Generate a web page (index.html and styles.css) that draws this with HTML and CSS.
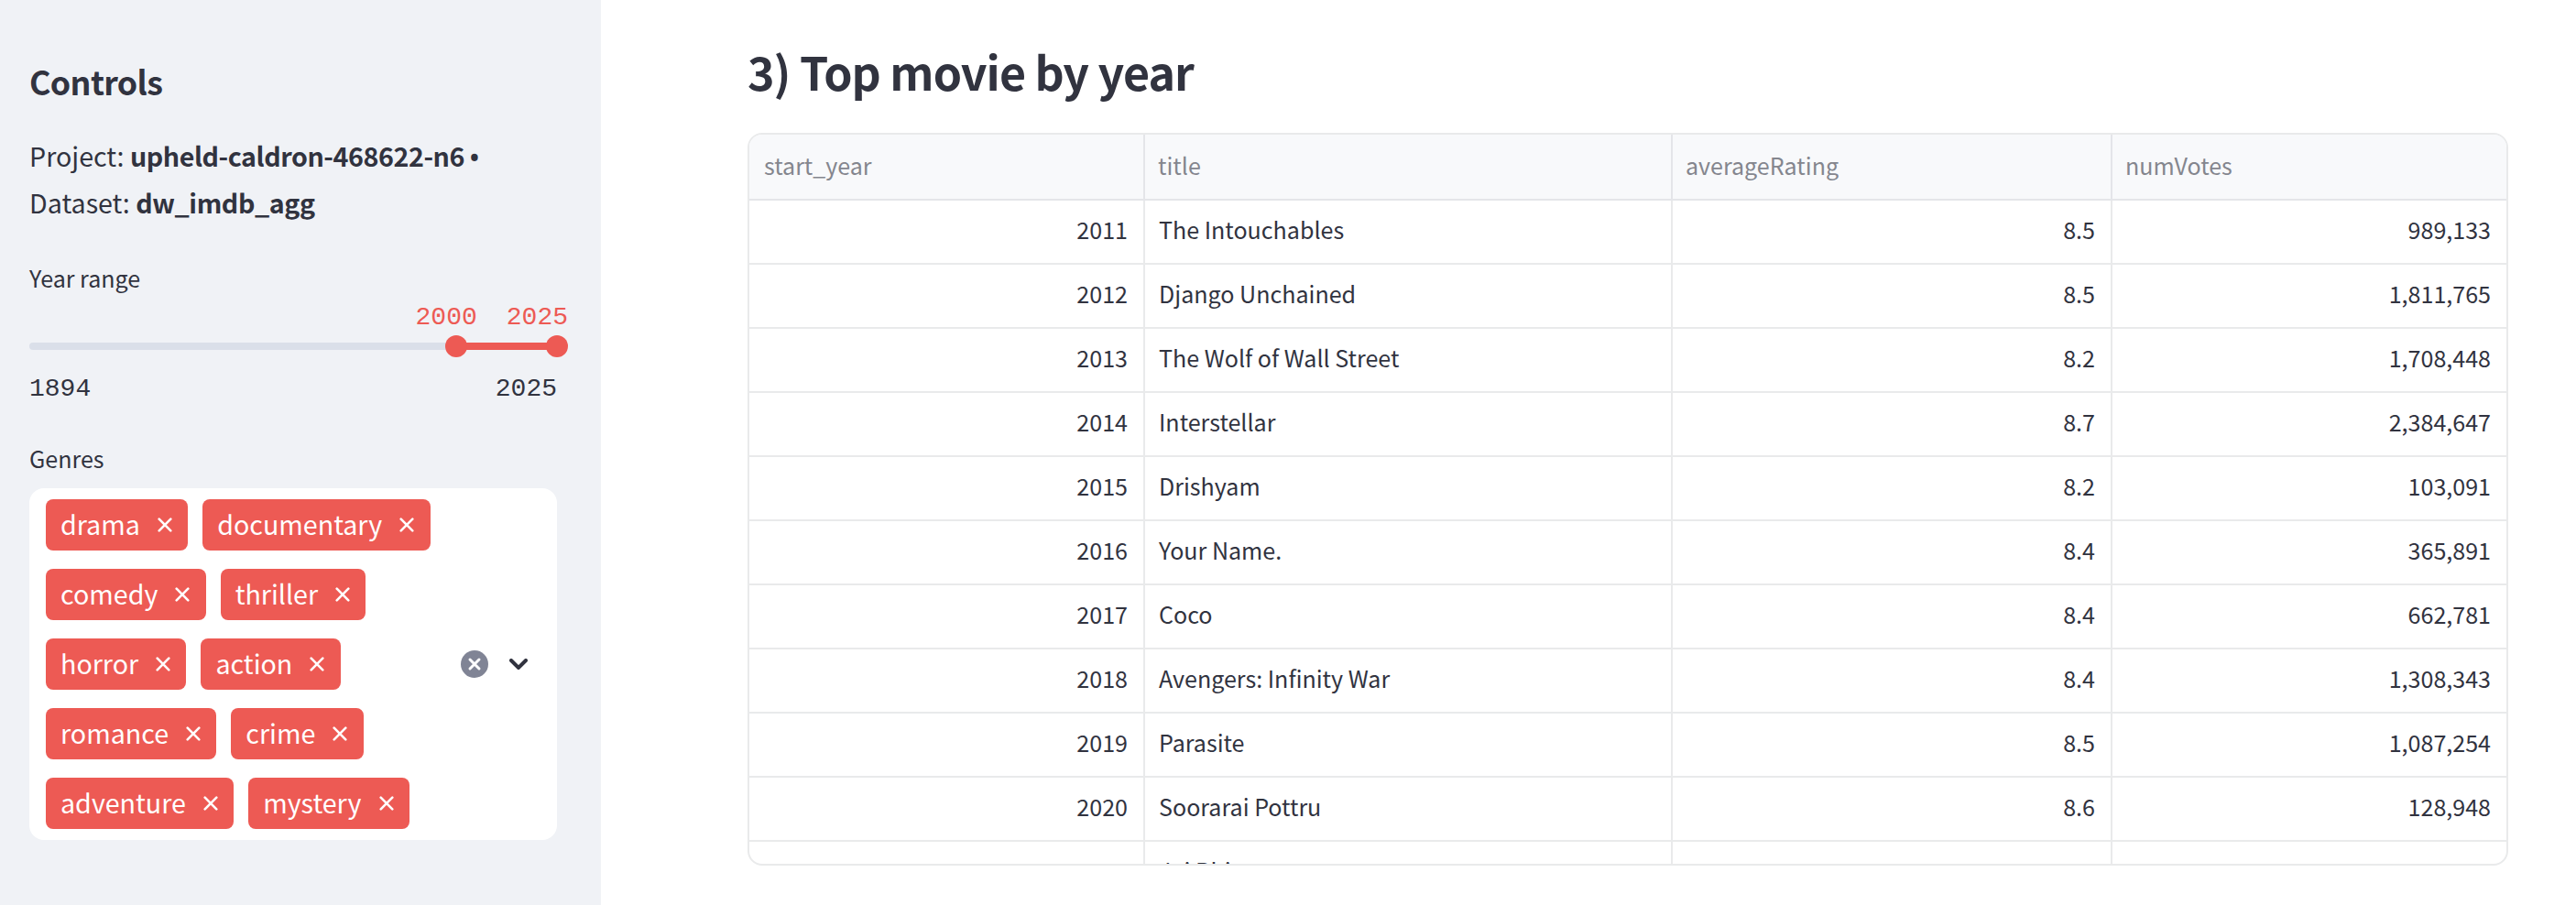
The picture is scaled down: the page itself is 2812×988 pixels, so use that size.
FILE: index.html
```html
<!DOCTYPE html>
<html lang="en">
<head>
<meta charset="utf-8">
<title>Top movie by year</title>
<link rel="stylesheet" href="styles.css">
</head>
<body>
<svg class="defs" width="0" height="0" aria-hidden="true">
  <symbol id="x" viewBox="0 0 16 16"><path d="M1.7 1.7 14.3 14.3M14.3 1.7 1.7 14.3" fill="none" stroke="currentColor" stroke-width="2.6" stroke-linecap="round"/></symbol>
</svg>
<div class="app">
  <aside class="sidebar">
    <h2 class="sidebar-title">Controls</h2>
    <p class="info">Project: <strong>upheld-caldron-468622-n6</strong> <span class="bullet">•</span><br>Dataset: <strong>dw_imdb_agg</strong></p>
    <div class="label">Year range</div>
    <div class="thumb-values"><span>2000</span><span>2025</span></div>
    <div class="slider">
      <div class="track"></div><div class="range"></div>
      <i class="thumb thumb-start"></i><i class="thumb thumb-end"></i>
    </div>
    <div class="limits"><span>1894</span><span>2025</span></div>
    <div class="label">Genres</div>
    <div class="select">
      <div class="tags">
        <div class="tag-row"><span class="tag">drama<svg class="x"><use href="#x"/></svg></span><span class="tag">documentary<svg class="x"><use href="#x"/></svg></span></div>
        <div class="tag-row"><span class="tag">comedy<svg class="x"><use href="#x"/></svg></span><span class="tag">thriller<svg class="x"><use href="#x"/></svg></span></div>
        <div class="tag-row"><span class="tag">horror<svg class="x"><use href="#x"/></svg></span><span class="tag">action<svg class="x"><use href="#x"/></svg></span></div>
        <div class="tag-row"><span class="tag">romance<svg class="x"><use href="#x"/></svg></span><span class="tag">crime<svg class="x"><use href="#x"/></svg></span></div>
        <div class="tag-row"><span class="tag">adventure<svg class="x"><use href="#x"/></svg></span><span class="tag">mystery<svg class="x"><use href="#x"/></svg></span></div>
      </div>
      <div class="actions">
        <svg class="clear" viewBox="0 0 30 30"><circle cx="15" cy="15" r="15" fill="#808495"/><path d="M10 10l10 10M20 10 10 20" stroke="#fff" stroke-width="3" stroke-linecap="round"/></svg>
        <svg class="chevron" viewBox="0 0 20 12"><path d="M2 2l8 8 8-8" fill="none" stroke="#31333f" stroke-width="4" stroke-linecap="round" stroke-linejoin="miter"/></svg>
      </div>
    </div>
  </aside>
  <main class="main">
    <h1 class="title">3) Top movie by year</h1>
    <div class="table">
      <div class="row head"><span>start_year</span><span>title</span><span>averageRating</span><span>numVotes</span></div>
      <div class="row"><span>2011</span><span>The Intouchables</span><span>8.5</span><span>989,133</span></div>
      <div class="row"><span>2012</span><span>Django Unchained</span><span>8.5</span><span>1,811,765</span></div>
      <div class="row"><span>2013</span><span>The Wolf of Wall Street</span><span>8.2</span><span>1,708,448</span></div>
      <div class="row"><span>2014</span><span>Interstellar</span><span>8.7</span><span>2,384,647</span></div>
      <div class="row"><span>2015</span><span>Drishyam</span><span>8.2</span><span>103,091</span></div>
      <div class="row"><span>2016</span><span>Your Name.</span><span>8.4</span><span>365,891</span></div>
      <div class="row"><span>2017</span><span>Coco</span><span>8.4</span><span>662,781</span></div>
      <div class="row"><span>2018</span><span>Avengers: Infinity War</span><span>8.4</span><span>1,308,343</span></div>
      <div class="row"><span>2019</span><span>Parasite</span><span>8.5</span><span>1,087,254</span></div>
      <div class="row"><span>2020</span><span>Soorarai Pottru</span><span>8.6</span><span>128,948</span></div>
      <div class="row"><span></span><span>Jai Bhim</span><span></span><span></span></div>
    </div>
  </main>
</div>
</body>
</html>
```
FILE: styles.css
```css
* { box-sizing: border-box; }
body {
  margin: 0;
  font-family: "Noto Sans CJK SC", "Noto Sans", sans-serif;
  color: #31333f;
  background: #fff;
  overflow: hidden;
}
.defs { position: absolute; }
.app { display: flex; width: 2812px; height: 988px; }

.sidebar {
  flex: 0 0 656px;
  padding: 64px 48px 0 32px;
  background: #f0f2f6;
}
.sidebar-title { margin: 0; font-size: 35.8px; line-height: 48px; font-weight: 600; letter-spacing: -0.65px; }
.info { margin: 32px 0 37px; font-size: 28.65px; line-height: 51px; white-space: nowrap; }
.info strong { font-weight: 600; letter-spacing: -0.42px; }
.bullet { font-family: "Noto Sans", sans-serif; font-weight: 600; line-height: 1; margin-left: -1px; }
.label { font-size: 25.07px; line-height: 40px; }
.thumb-values, .limits {
  display: flex;
  font-family: "Liberation Mono", monospace;
  font-size: 28px;
  line-height: 40px;
  height: 40px;
}
.thumb-values { margin: 3px -12px 0 0; justify-content: flex-end; gap: 32px; color: #ed5a54; }
.slider { position: relative; display: flex; align-items: center; height: 24px; }
.track { flex: 0 0 466px; height: 8px; border-radius: 4px 0 0 4px; background: #dadfe9; }
.range { flex: 1; height: 8px; background: #ed5a54; }
.thumb { position: absolute; top: 0; width: 24px; height: 24px; border-radius: 50%; background: #ed5a54; }
.thumb-start { left: 454px; }
.thumb-end { left: 564px; }
.limits { justify-content: space-between; margin: 14px 0 36px; padding-top: 1px; }
.thumb-values { padding-top: 1px; }

.select {
  display: flex;
  justify-content: space-between;
  align-items: center;
  height: 384px;
  margin-top: 13px;
  padding: 12px 32px 12px 18px;
  border-radius: 16px;
  background: #fff;
}
.tags { display: flex; flex-direction: column; gap: 20px; }
.tag-row { display: flex; gap: 16px; }
.tag {
  display: flex;
  align-items: center;
  height: 56px;
  padding: 0 17.3px 2px 16px;
  border-radius: 8px;
  background: #ed5a54;
  color: #fff;
  font-size: 28.65px;
  line-height: 52px;
}
.x { width: 16px; height: 16px; margin: 2px 0 0 19px; }
.actions { display: flex; align-items: center; gap: 23px; }
.clear { width: 30px; height: 30px; }
.chevron { width: 20px; height: 12px; }

.main { padding: 41px 74px 0 160px; flex: 1; }
.title { margin: 0 0 32px; font-size: 50.1px; line-height: 72px; font-weight: 600; letter-spacing: -0.95px; }
.table {
  height: 800px;
  overflow: hidden;
  border: 2px solid #e9eaeb;
  border-radius: 16px;
}
.row { display: grid; grid-template-columns: 432px 576px 480px 430px; height: 70px; }
.row span {
  padding: 0 17px 0 15px;
  border-right: 2px solid #e9eaeb;
  border-bottom: 2px solid #e9eaeb;
  font-size: 25.07px;
  line-height: 62px;
  text-align: right;
  white-space: nowrap;
}
.row span:nth-child(2) { text-align: left; }
.row span:last-child { border-right: 0; }
.row.head { height: 72px; }
.row.head span { padding-left: 14px; text-align: left; line-height: 66px; color: #84868e; background: #f8f9fb; border-color: #e4e5e9; }
.row.head span:first-child { padding-left: 16px; }
```
